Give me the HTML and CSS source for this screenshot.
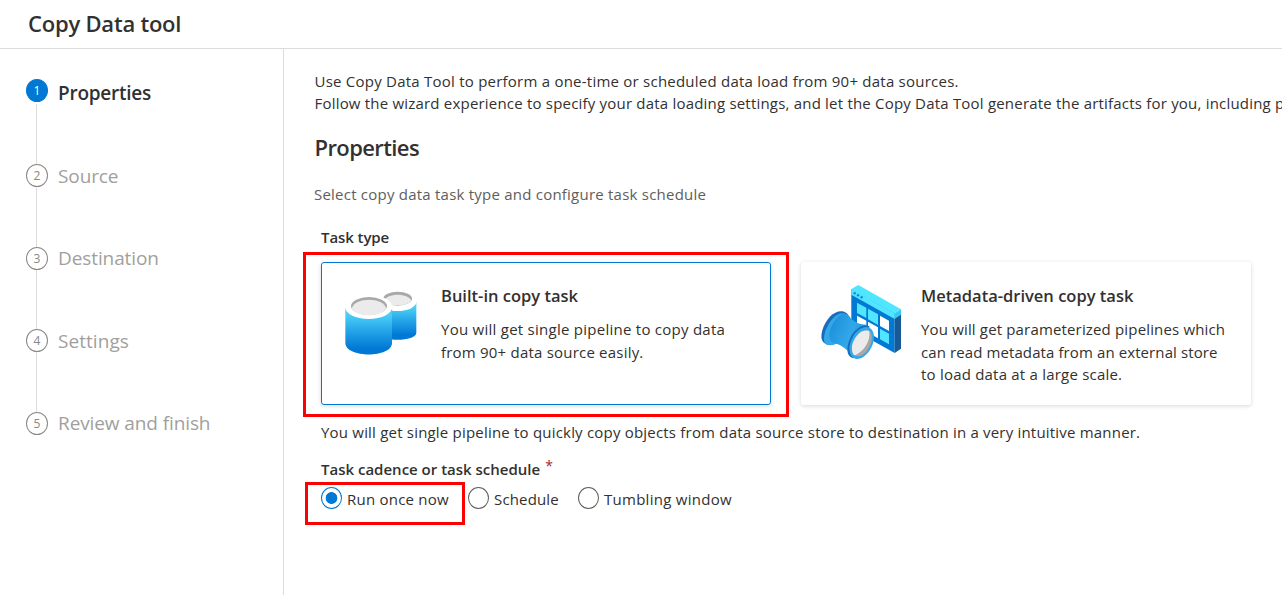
FILE: index.html
```
<!DOCTYPE html>
<html lang="en">
<head>
<meta charset="utf-8">
<title>Copy Data tool</title>
<link rel="stylesheet" href="styles.css">
</head>
<body>
<header class="topbar"><h1 class="title"><span>Copy Data tool</span></h1></header>
<div class="layout">
  <nav class="steps">
    <div class="step active"><span class="rail"><i class="num">1</i></span><span class="name">Properties</span></div>
    <div class="step"><span class="rail"><i class="num">2</i></span><span class="name source">Source</span></div>
    <div class="step"><span class="rail"><i class="num">3</i></span><span class="name destination">Destination</span></div>
    <div class="step"><span class="rail"><i class="num">4</i></span><span class="name settings">Settings</span></div>
    <div class="step"><span class="rail"><i class="num">5</i></span><span class="name review">Review and finish</span></div>
  </nav>
  <main class="content">
    <p class="intro"><span class="line intro-a">Use Copy Data Tool to perform a one-time or scheduled data load from 90+ data sources.</span><span class="line intro-b">Follow the wizard experience to specify your data loading settings, and let the Copy Data Tool generate the artifacts for you, including p</span></p>
    <h2 class="heading">Properties</h2>
    <p class="subtitle">Select copy data task type and configure task schedule</p>
    <section class="form">
      <h3 class="label type-label">Task type</h3>
      <div class="cards">
        <article class="card selected">
          <svg class="art" viewBox="0 0 285 255" aria-hidden="true">
            <defs>
              <linearGradient id="blue" x1="0" y1="0" x2="0" y2="1"><stop offset="0.18" stop-color="#48cdf4"/><stop offset="0.5" stop-color="#25a4e8"/><stop offset="0.88" stop-color="#0078d4"/></linearGradient>
            </defs>
            <path d="M132 65V158C132 186 244 186 244 158V65Z" fill="url(#blue)"/>
            <ellipse cx="188" cy="64" rx="57" ry="29" fill="#fff"/>
            <ellipse cx="188" cy="56" rx="43" ry="21" fill="#a8a8a8"/>
            <path d="M147 63C155 38 221 38 229 63C217 80 159 80 147 63Z" fill="#ebebeb"/>
            <path d="M31 82V188C31 235 171 235 171 188V82Z" fill="url(#blue)"/>
            <ellipse cx="101" cy="81" rx="71" ry="36" fill="#fff"/>
            <ellipse cx="102" cy="78" rx="54" ry="27" fill="#a8a8a8"/>
            <path d="M50 86C58 50 146 50 154 86C137 112 67 112 50 86Z" fill="#ebebeb"/>
          </svg>
          <div class="copy"><h4 class="card-title built">Built-in copy task</h4><p class="desc"><span class="line d1">You will get single pipeline to copy data</span><span class="line d2">from 90+ data source easily.</span></p></div>
          <span class="mark mark-card"></span>
        </article>
        <article class="card">
          <svg class="art" viewBox="9 12 285 255" aria-hidden="true">
            <defs><linearGradient id="tube" x1="0" y1="0" x2="1" y2="0.5"><stop offset="0" stop-color="#198ad9"/><stop offset="0.65" stop-color="#32a8e8"/><stop offset="1" stop-color="#1b8edb"/></linearGradient></defs>
            <path d="M118 39L248 111V231L118 158Z" fill="#0078d4"/>
            <path d="M248 124L267 114V218L248 231Z" fill="#185a97"/>
            <path d="M118 39L139 27L267 100L248 112Z" fill="#50e6ff"/>
            <path d="M118 39L248 112V129L118 56Z" fill="#50e6ff"/>
            <path d="M248 112L267 100V116L248 129Z" fill="#3cc7ef"/>
            <g fill="#198ad4"><circle cx="128" cy="52" r="3.8"/><circle cx="138" cy="58" r="3.8"/><circle cx="149" cy="64" r="3.8"/></g>
            <path d="M135 80L163 95V126L135 111Z" fill="#50e6ff"/><path d="M168 98L198 115V147L168 130Z" fill="#50e6ff"/><path d="M204 119L231 134V165L204 150Z" fill="#fff"/><path d="M135 119L163 134V165L135 150Z" fill="#fff"/><path d="M168 137L198 154V187L168 170Z" fill="#fff"/><path d="M204 158L231 173V205L204 190Z" fill="#50e6ff"/>
            <path d="M105 112C80 93 43 120 31 163C24 189 30 201 48 207L66 199L109 122Z" fill="#186dbb"/>
            <path d="M113 122C87 94 54 127 41 163C32 190 34 208 54 208C66 207 76 203 80 197L113 127Z" fill="#32a8e8"/>
            <path d="M106 113C118 132 137 146 164 146L123 238C106 224 90 206 67 202C38 192 56 139 84 118Q97 110 106 113Z" fill="url(#tube)"/>
            <path d="M172 151C149 140 119 165 109 201C101 232 111 242 123 247L171 207Z" fill="#186dbb"/>
            <ellipse cx="149" cy="201" rx="32" ry="51" transform="rotate(27 149 201)" fill="#32a8e8"/>
            <ellipse cx="151" cy="202" rx="24" ry="42" transform="rotate(27 151 202)" fill="#a8a8a8"/>
            <path d="M168 164C143 157 118 195 120 218C120 230 124 238 130 238C157 223 175 199 172 165Z" fill="#ebebeb"/>
          </svg>
          <div class="copy"><h4 class="card-title meta">Metadata-driven copy task</h4><p class="desc"><span class="line m1">You will get parameterized pipelines which</span><span class="line m2">can read metadata from an external store</span><span class="line m3">to load data at a large scale.</span></p></div>
        </article>
      </div>
      <p class="summary">You will get single pipeline to quickly copy objects from data source store to destination in a very intuitive manner.</p>
      <h3 class="label cadence">Task cadence or task schedule<span class="star">*</span></h3>
      <div class="radios">
        <span class="radio on"><i class="dot"></i><span class="rl run">Run once now</span><span class="mark mark-radio"></span></span>
        <span class="radio"><i class="dot"></i><span class="rl sched">Schedule</span></span>
        <span class="radio"><i class="dot"></i><span class="rl tumb">Tumbling window</span></span>
      </div>
    </section>
  </main>
</div>
</body>
</html>
```
FILE: styles.css
```
* { box-sizing: border-box; }
body { margin: 0; width: 1282px; height: 595px; overflow: hidden; background: #fff; color: #323130; font: 15px/22.5px "Open Sans", "Noto Sans", sans-serif; }
h1, h2, h3, h4, p { margin: 0; }
i { font-style: normal; }
.topbar { height: 49px; border-bottom: 1px solid #dcdcdc; padding-left: 28px; }
.title { font-size: 22px; line-height: 47px; font-weight: 600; letter-spacing: -.22px; }
.layout { display: flex; height: 546px; overflow: hidden; }
.steps { width: 284px; flex: none; border-right: 1px solid #dcdcdc; padding: 30px 0 0 26px; }
.step { display: flex; height: 82.5px; gap: 10px; color: #a19f9d; }
.step.active { height: 85px; color: #323130; }
.rail { width: 22px; display: flex; flex-direction: column; }
.rail::after { content: ""; flex: 1; width: 1px; margin-left: 10px; background: #dcdcdc; }
.active .rail::after { margin-top: 2px; }
.step:last-child .rail::after { display: none; }
.num { width: 22px; height: 23px; flex: none; border: 1px solid #8a8886; border-radius: 50%; font-size: 12px; line-height: 21px; text-align: center; color: #8a8886; }
.active .num { background: #0078d4; border-color: #0078d4; color: #fff; }
.name { font-size: 19px; line-height: 23px; letter-spacing: -.1px; }
.source, .settings { padding-top: 1px; }
.settings { letter-spacing: .05px; }
.active .name { font-weight: 600; padding-top: 3px; letter-spacing: -.25px; }
.content { flex: 1; min-width: 0; overflow: hidden; padding: 21px 0 0 30px; }
.line { display: block; white-space: nowrap; }
.intro { line-height: 22px; padding-left: .5px; }
.intro-a { letter-spacing: .233px; }
.intro-b { letter-spacing: .2px; }
.heading { font-size: 22px; line-height: 30px; font-weight: 600; letter-spacing: -.6px; margin-top: 18px; padding-left: .5px; }
.subtitle { color: #605e5c; margin-top: 21px; letter-spacing: .226px; }
.form { padding: 20px 0 0 7px; }
.label { font-size: 15px; font-weight: 600; letter-spacing: -.08px; }
.cards { display: flex; gap: 30px; margin-top: 14px; }
.card { position: relative; display: flex; flex: none; width: 450px; height: 143px; padding: 18px 0 0 14px; gap: 11px; border-radius: 3px; box-shadow: 0 1px 4px rgba(0,0,0,.16); }
.card.selected { padding: 17px 0 0 13px; border: 1px solid #0078d4; }
.art { width: 95px; height: 85px; flex: none; }
.copy { padding-top: 5px; }
.card-title { font-size: 16.5px; line-height: 22px; font-weight: 600; }
.desc { margin-top: 11px; }
.d1 { letter-spacing: .26px; }
.d2, .m3 { letter-spacing: .21px; }
.m1 { letter-spacing: .16px; }
.m2 { letter-spacing: .1px; }
.mark { position: absolute; border: 3px solid #f00; pointer-events: none; }
.mark-card { left: -19px; top: -11px; width: 486px; height: 165px; }
.mark-radio { left: -16px; top: -5px; width: 160px; height: 43px; }
.summary { margin-top: 16px; white-space: nowrap; letter-spacing: .2px; }
.cadence { margin-top: 14px; letter-spacing: 0; }
.star { color: #a4262c; margin-left: 5px; font-size: 14px; line-height: 1; font-weight: 400; position: relative; top: -4px; }
.radios { display: grid; grid-template-columns: 147px 110px 200px; margin-top: 7px; }
.radio { position: relative; display: flex; gap: 5px; white-space: nowrap; }
.rl { line-height: 24px; }
.run { letter-spacing: .23px; }
.sched { letter-spacing: .16px; }
.tumb { letter-spacing: .27px; }
.dot { width: 21px; height: 22px; flex: none; border: 1px solid #605e5c; border-radius: 50%; }
.on .dot { border-color: #0078d4; background: radial-gradient(circle, #0078d4 5.5px, transparent 6.2px); }
```
